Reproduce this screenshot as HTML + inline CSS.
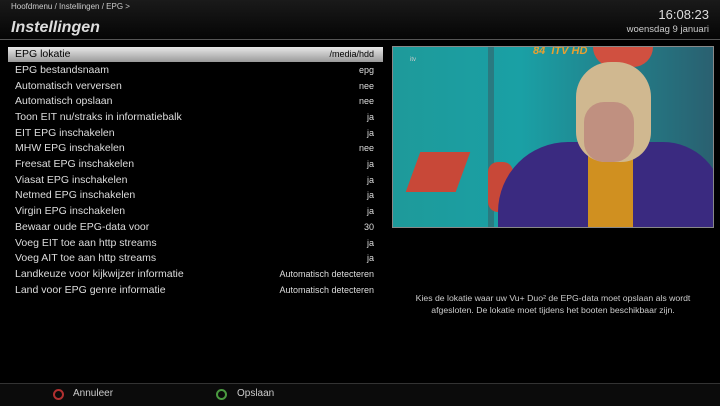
<html><head><style>
body{margin:0;width:720px;height:405px;background:#000;overflow:hidden;font-family:"Liberation Sans",sans-serif;color:#ddd;position:relative}
.hdr{position:absolute;left:0;top:0;width:720px;height:39px;background:linear-gradient(#1a1a1a,#050505);border-bottom:1px solid #555}
.bc{position:absolute;left:11px;top:2px;font-size:8px;color:#ccc}
.title{position:absolute;left:11px;top:19px;font-size:16px;font-weight:bold;font-style:italic;color:#ddd}
.time{position:absolute;right:11px;top:7px;font-size:13px;color:#ddd}
.date{position:absolute;right:11px;top:24px;font-size:9.5px;color:#ccc}
.row{position:absolute;left:8px;width:375px;height:15px;font-size:10.5px;line-height:15px}
.row span{position:absolute;left:7px}
.row b{position:absolute;right:9px;font-weight:normal;font-size:9px}
.sel{background:linear-gradient(#e8e8e8,#9a9a9a);color:#000}
.vid{position:absolute;left:392px;top:46px;width:320px;height:180px;border:1px solid #888;background:linear-gradient(90deg,#1e9a9a 0%,#1aa0a5 40%,#2a6070 100%);overflow:hidden}
.desc{position:absolute;left:397px;top:292px;width:312px;text-align:center;font-size:8.7px;line-height:12px;color:#ccc}
.ftr{position:absolute;left:0;top:383px;width:720px;height:22px;border-top:1px solid #333;background:#0b0b0b}
.ftr .b{position:absolute;top:5px;width:7px;height:7px;border-radius:50%;border:2.5px solid}
.ftr .t{position:absolute;top:4px;font-size:10px;color:#ccc}
</style></head><body>
<div class="hdr"><div class="bc">Hoofdmenu / Instellingen / EPG &gt;</div><div class="title">Instellingen</div><div class="time">16:08:23</div><div class="date">woensdag 9 januari</div></div>
<div class="row sel" style="top:47px"><span>EPG lokatie</span><b>/media/hdd</b></div>
<div class="row" style="top:63px"><span>EPG bestandsnaam</span><b>epg</b></div>
<div class="row" style="top:79px"><span>Automatisch verversen</span><b>nee</b></div>
<div class="row" style="top:94px"><span>Automatisch opslaan</span><b>nee</b></div>
<div class="row" style="top:110px"><span>Toon EIT nu/straks in informatiebalk</span><b>ja</b></div>
<div class="row" style="top:126px"><span>EIT EPG inschakelen</span><b>ja</b></div>
<div class="row" style="top:141px"><span>MHW EPG inschakelen</span><b>nee</b></div>
<div class="row" style="top:157px"><span>Freesat EPG inschakelen</span><b>ja</b></div>
<div class="row" style="top:173px"><span>Viasat EPG inschakelen</span><b>ja</b></div>
<div class="row" style="top:188px"><span>Netmed EPG inschakelen</span><b>ja</b></div>
<div class="row" style="top:204px"><span>Virgin EPG inschakelen</span><b>ja</b></div>
<div class="row" style="top:220px"><span>Bewaar oude EPG-data voor</span><b>30</b></div>
<div class="row" style="top:236px"><span>Voeg EIT toe aan http streams</span><b>ja</b></div>
<div class="row" style="top:251px"><span>Voeg AIT toe aan http streams</span><b>ja</b></div>
<div class="row" style="top:267px"><span>Landkeuze voor kijkwijzer informatie</span><b>Automatisch detecteren</b></div>
<div class="row" style="top:283px"><span>Land voor EPG genre informatie</span><b>Automatisch detecteren</b></div>
<div class="vid">
<div style="position:absolute;left:95px;top:0;width:6px;height:180px;background:#2a7a80"></div>
<div style="position:absolute;left:200px;top:0;width:60px;height:20px;background:#d05040;border-radius:0 0 20px 20px"></div>
<div style="position:absolute;left:20px;top:105px;width:50px;height:40px;background:#c84838;transform:skew(-20deg)"></div>
<div style="position:absolute;left:95px;top:115px;width:25px;height:50px;background:#c84838;border-radius:10px"></div>
<div style="position:absolute;left:105px;top:95px;width:225px;height:100px;background:#3a2a80;border-radius:70px 60px 0 0"></div>
<div style="position:absolute;left:195px;top:95px;width:45px;height:90px;background:#d09020"></div>
<div style="position:absolute;left:183px;top:15px;width:75px;height:100px;background:#d0b890;border-radius:35px 35px 30px 30px"></div>
<div style="position:absolute;left:191px;top:55px;width:50px;height:60px;background:#c09080;border-radius:20px"></div>
<div style="position:absolute;left:140px;top:-2px;font-size:11px;font-weight:bold;font-style:italic;color:#e8a030">84 &nbsp;ITV HD</div>
<div style="position:absolute;left:17px;top:10px;font-size:6px;color:#ccc">itv</div>
</div>
<div class="desc">Kies de lokatie waar uw Vu+ Duo² de EPG-data moet opslaan als wordt afgesloten. De lokatie moet tijdens het booten beschikbaar zijn.</div>
<div class="ftr"><div class="b" style="left:53px;border-color:#b03030"></div><div class="t" style="left:73px">Annuleer</div><div class="b" style="left:216px;border-color:#4a9a40"></div><div class="t" style="left:237px">Opslaan</div></div>
</body></html>
